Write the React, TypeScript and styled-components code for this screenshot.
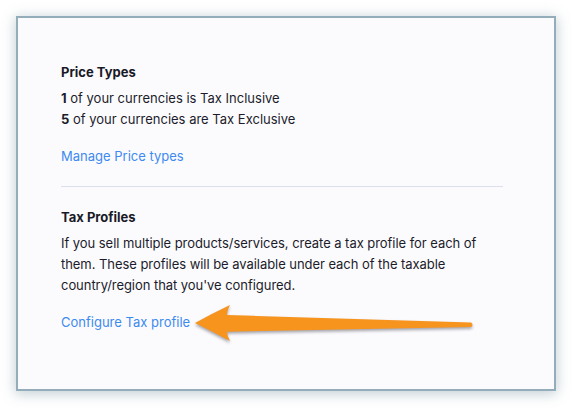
import React from "react";
import styled, { createGlobalStyle } from "styled-components";

const GlobalStyle = createGlobalStyle`
  html, body {
    margin: 0;
    padding: 0;
    background: #ffffff;
  }
  body {
    font-family: Inter, "Noto Sans", "Liberation Sans", sans-serif;
    -webkit-font-smoothing: antialiased;
  }
`;

const Page = styled.div`
  padding: 16px;
  width: 572px;
  height: 408px;
  box-sizing: border-box;
`;

const Card = styled.div`
  position: relative;
  box-sizing: border-box;
  width: 540px;
  height: 375px;
  border: 2px solid #93adba;
  background: #fbfbfe;
  box-shadow: 0 2px 12px 1px rgba(90, 120, 135, 0.35);
  padding: 44px 51px 0 43px;
  font-size: 13px;
  line-height: 21px;
  color: #1c1c2a;
`;

const Section = styled.section`
  display: flex;
  flex-direction: column;
  align-items: flex-start;
`;

const Heading = styled.h3`
  margin: 0 0 5px;
  font-size: 13px;
  line-height: 21px;
  font-weight: 700;
  color: #1a1a27;
`;

const Line = styled.p`
  margin: 0;
`;

const Paragraph = styled.p`
  margin: 0;
  letter-spacing: -0.05px;
`;

const Link = styled.a`
  margin-top: 16px;
  color: #3d8af0;
  text-decoration: none;
  cursor: pointer;
`;

const Divider = styled.hr`
  margin: 19px 0 20px;
  border: none;
  border-top: 1px solid #dcdfec;
  height: 0;
`;

const ArrowOverlay = styled.svg`
  position: absolute;
  left: 172px;
  top: 282px;
  width: 292px;
  height: 50px;
  overflow: visible;
  filter: drop-shadow(0 2px 1.5px rgba(60, 60, 70, 0.45));
`;

export default function App() {
  return (
    <>
      <GlobalStyle />
      <Page>
        <Card>
          <Section>
            <Heading>Price Types</Heading>
            <Line>
              <b>1</b> of your currencies is Tax Inclusive
            </Line>
            <Line>
              <b>5</b> of your currencies are Tax Exclusive
            </Line>
            <Link>Manage Price types</Link>
          </Section>
          <Divider />
          <Section>
            <Heading>Tax Profiles</Heading>
            <Paragraph>
              If you sell multiple products/services, create a tax profile for each of
              them. These profiles will be available under each of the taxable
              country/region that you've configured.
            </Paragraph>
            <Link>Configure Tax profile</Link>
          </Section>
          <ArrowOverlay viewBox="0 0 292 50">
            <path
              d="M5,23 Q23,13 40,5 Q37,10 37,15 L281,22.4 Q284,24.6 281,26.9 L37,31.7 Q37,36 40,41 Q23,32 5,23 Z"
              fill="#f7941e"
            />
          </ArrowOverlay>
        </Card>
      </Page>
    </>
  );
}
